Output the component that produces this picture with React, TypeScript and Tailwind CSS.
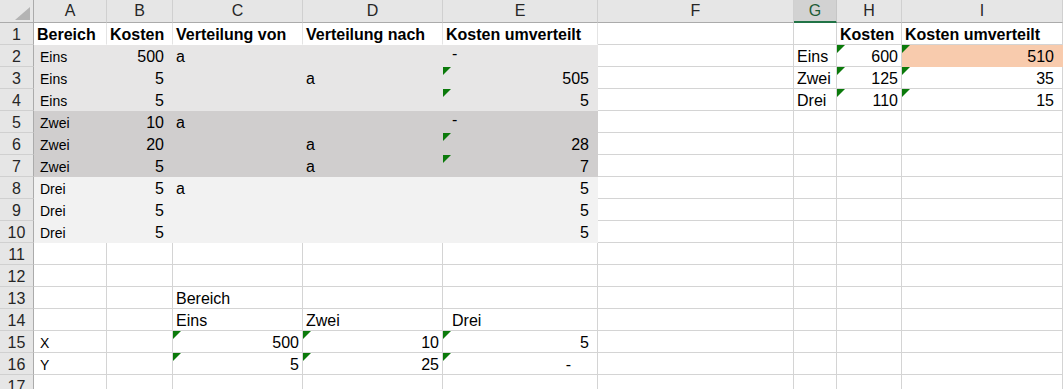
import React from 'react';

type Cell = {
  t?: string;
  r?: boolean; // right aligned
  acc?: boolean; // accounting format, trailing space
  b?: boolean;
  sm?: boolean;
  tri?: boolean;
  pad?: string;
};

const cols = ['A', 'B', 'C', 'D', 'E', 'F', 'G', 'H', 'I'];
const widths = ['w-[73px]', 'w-[66px]', 'w-[130px]', 'w-[140px]', 'w-[155px]', 'w-[196px]', 'w-[43px]', 'w-[65px]', 'w-[161px]'];

const data: Record<number, Partial<Record<string, Cell>>> = {
  1: {
    A: { t: 'Bereich', b: true },
    B: { t: 'Kosten', b: true },
    C: { t: 'Verteilung von', b: true },
    D: { t: 'Verteilung nach', b: true },
    E: { t: 'Kosten umverteilt', b: true },
    H: { t: 'Kosten', b: true },
    I: { t: 'Kosten umverteilt', b: true },
  },
  2: {
    A: { t: 'Eins', sm: true },
    B: { t: '500', r: true, acc: true },
    C: { t: 'a' },
    E: { t: '-', pad: 'pl-[9px] pb-[3px]' },
    G: { t: 'Eins' },
    H: { t: '600', r: true, tri: true },
    I: { t: '510', r: true, acc: true, tri: true },
  },
  3: {
    A: { t: 'Eins', sm: true },
    B: { t: '5', r: true, acc: true },
    D: { t: 'a' },
    E: { t: '505', r: true, acc: true, tri: true },
    G: { t: 'Zwei' },
    H: { t: '125', r: true, tri: true },
    I: { t: '35', r: true, acc: true, tri: true },
  },
  4: {
    A: { t: 'Eins', sm: true },
    B: { t: '5', r: true, acc: true },
    E: { t: '5', r: true, acc: true, tri: true },
    G: { t: 'Drei' },
    H: { t: '110', r: true, tri: true },
    I: { t: '15', r: true, acc: true, tri: true },
  },
  5: {
    A: { t: 'Zwei', sm: true },
    B: { t: '10', r: true, acc: true },
    C: { t: 'a' },
    E: { t: '-', pad: 'pl-[9px] pb-[3px]' },
  },
  6: {
    A: { t: 'Zwei', sm: true },
    B: { t: '20', r: true, acc: true },
    D: { t: 'a' },
    E: { t: '28', r: true, acc: true, tri: true },
  },
  7: {
    A: { t: 'Zwei', sm: true },
    B: { t: '5', r: true, acc: true },
    D: { t: 'a' },
    E: { t: '7', r: true, acc: true, tri: true },
  },
  8: {
    A: { t: 'Drei', sm: true },
    B: { t: '5', r: true, acc: true },
    C: { t: 'a' },
    E: { t: '5', r: true, acc: true },
  },
  9: {
    A: { t: 'Drei', sm: true },
    B: { t: '5', r: true, acc: true },
    E: { t: '5', r: true, acc: true },
  },
  10: {
    A: { t: 'Drei', sm: true },
    B: { t: '5', r: true, acc: true },
    E: { t: '5', r: true, acc: true },
  },
  13: { C: { t: 'Bereich' } },
  14: {
    C: { t: 'Eins' },
    D: { t: 'Zwei' },
    E: { t: 'Drei', pad: 'pl-[9px]' },
  },
  15: {
    A: { t: 'X', sm: true },
    C: { t: '500', r: true, tri: true },
    D: { t: '10', r: true, tri: true },
    E: { t: '5', r: true, acc: true, tri: true },
  },
  16: {
    A: { t: 'Y', sm: true },
    C: { t: '5', r: true, tri: true },
    D: { t: '25', r: true, tri: true },
    E: { t: '-', r: true, tri: true, pad: 'pr-[26px]' },
  },
};

// cell fill + gridline colours
const fillFor = (row: number, ci: number) => {
  if (ci <= 4) {
    if (row === 1) return 'bg-white border-r-[#e4e4e4] border-b-white';
    if (row >= 2 && row <= 4) return 'bg-[#e7e6e6] border-[#e7e6e6]';
    if (row >= 5 && row <= 7) return 'bg-[#d0cece] border-[#d0cece]';
    if (row >= 8 && row <= 10) return 'bg-[#f2f2f2] border-[#f2f2f2]';
  }
  if (row === 2 && ci === 8) return 'bg-[#f8cbad] border-[#f8cbad]';
  return 'bg-white border-[#d4d4d4]';
};

const GreenMark = () => (
  <span className="absolute left-0 top-0 h-0 w-0 border-t-[8px] border-r-[8px] border-t-[#0b7a0b] border-r-transparent" />
);

const SheetCell = ({ row, ci }: { row: number; ci: number }) => {
  const c = data[row]?.[cols[ci]];
  let pad = 'pl-[3px]';
  if (c?.sm) pad = 'pl-[6px]';
  if (c?.r) pad = c.acc ? 'pr-[8px]' : 'pr-[3px]';
  if (c?.pad) pad = c.pad;

  return (
    <div
      className={`relative flex h-full shrink-0 items-end border-r border-b ${widths[ci]} ${fillFor(row, ci)} ${
        c?.r ? 'justify-end' : 'justify-start'
      } ${pad}`}
    >
      {c?.tri && <GreenMark />}
      {c?.t && (
        <span
          className={`whitespace-nowrap leading-[18px] text-black ${c.sm ? 'text-[14px]' : 'text-[16px]'} ${
            c.b ? 'font-bold' : ''
          }`}
        >
          {c.t}
        </span>
      )}
    </div>
  );
};

const App: React.FC = () => {
  const rows = Array.from({ length: 17 }, (_, i) => i + 1);

  return (
    <div className="h-[389px] w-[1063px] overflow-hidden bg-white font-['Liberation_Sans',Arial,sans-serif]">
      {/* column headers */}
      <div className="flex h-[23px]">
        <div className="relative h-full w-[34px] shrink-0 border-r border-b border-r-[#ababab] border-b-[#ababab] bg-[#e6e6e6]">
          <svg className="absolute left-[15px] top-[7px]" width="15" height="13" viewBox="0 0 15 13">
            <polygon points="15,0 15,13 0,13" fill="#b4b4b4" />
          </svg>
        </div>
        {cols.map((col, ci) =>
          col === 'G' ? (
            <div
              key={col}
              className={`flex h-full shrink-0 items-center justify-center border-r border-r-[#c6c6c6] border-b-2 border-b-[#217346] bg-[#d2d2d2] pt-[1px] text-[16px] text-[#1d5c36] ${widths[ci]}`}
            >
              {col}
            </div>
          ) : (
            <div
              key={col}
              className={`flex h-full shrink-0 items-center justify-center border-r border-b border-r-[#d0d0d0] border-b-[#ababab] bg-[#e6e6e6] text-[16px] text-[#262626] ${widths[ci]}`}
            >
              {col}
            </div>
          )
        )}
      </div>

      {rows.map((row) => (
        <div key={row} className="flex h-[22px]">
          <div className="flex h-full w-[34px] shrink-0 items-end justify-center border-r border-b border-r-[#ababab] border-b-[#d0d0d0] bg-[#e6e6e6] text-[16px] leading-[18px] text-[#262626]">
            {row}
          </div>
          {cols.map((_, ci) => (
            <SheetCell key={ci} row={row} ci={ci} />
          ))}
        </div>
      ))}
    </div>
  );
};

export default App;
